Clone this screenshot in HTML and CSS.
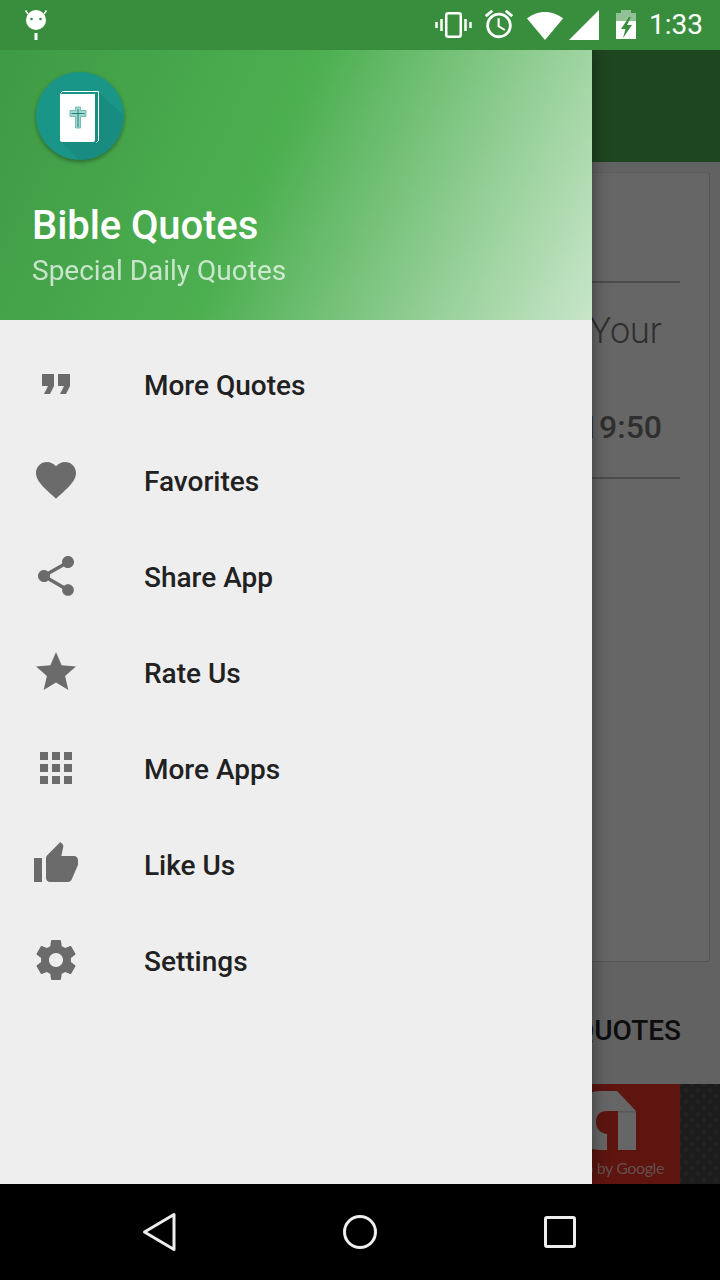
FILE: index.html
```html
<!DOCTYPE html>
<html lang="en">
<head>
<meta charset="utf-8">
<title>Bible Quotes</title>
<link rel="stylesheet" href="styles.css">
</head>
<body>
<div class="phone">
  <header class="status">
    <svg class="st-android" width="24" height="32" viewBox="0 0 24 32"><circle cx="12" cy="10" r="10" fill="#fff"/><path d="M4 4 1.500 0.500M20 4 22.500 0.500" stroke="#fff" stroke-width="1.500"/><circle cx="7.500" cy="9" r="1.300" fill="#388e3c"/><circle cx="16.500" cy="9" r="1.300" fill="#388e3c"/><rect x="10.500" y="23" width="3" height="7" fill="#fff"/></svg>
    <div class="st-right">
      <svg width="39" height="30" viewBox="0 0 39 30"><rect x="12.250" y="3.250" width="14.500" height="23.500" rx="2" fill="none" stroke="#fff" stroke-width="2.500"/><path d="M7.500 9v12M31.500 9v12" stroke="#fff" stroke-width="2.500"/><path d="M2.500 12v6M36.500 12v6" stroke="#fff" stroke-width="2.500"/></svg>
      <svg class="st-alarm" width="34" height="34" viewBox="0 0 24 24"><path fill="#fff" d="M22 5.720l-4.600-3.860-1.290 1.530 4.600 3.860L22 5.720zM7.880 3.390L6.600 1.860 2 5.710l1.290 1.530 4.590-3.850zM12.500 8H11v6l4.750 2.850.75-1.230-4-2.370V8zM12 4c-4.970 0-9 4.030-9 9s4.030 9 9 9 9-4.030 9-9-4.030-9-9-9zm0 16c-3.870 0-7-3.130-7-7s3.130-7 7-7 7 3.130 7 7-3.130 7-7 7z"/></svg>
      <svg class="st-wifi" width="36" height="28" viewBox="0 0 36 28"><path fill="#fff" d="M18 28 0 6.500C5 2.500 11 0 18 0s13 2.500 18 6.500z"/></svg>
      <svg class="st-signal" width="30" height="30" viewBox="0 0 30 30"><path fill="#fff" d="M30 0v30H0z"/></svg>
      <svg class="st-batt" width="20" height="30" viewBox="0 0 20 30"><path fill="#fff" fill-opacity=".45" d="M5 0h10v3h5v8H0V3h5z"/><path fill="#fff" d="M0 11h20v18H0z"/><path fill="#388e3c" d="M13 7 5 19h4.500L7 28l9-13h-5l4-8z"/></svg>
      <span class="st-time">1:33</span>
    </div>
  </header>

  <main class="stage">
    <div class="app">
      <div class="app-bar"></div>
      <div class="app-body">
        <div class="card">
          <div class="card-inner">
            <div class="card-line"></div>
            <div class="card-your">Your</div>
            <div class="card-time">19:50</div>
            <div class="card-line"></div>
          </div>
        </div>
      </div>
      <div class="app-tab">QUOTES</div>
      <div class="ad">
        <div class="ad-red">
          <svg class="ad-logo" width="70" height="70" viewBox="0 0 70 70"><path fill="#fff" d="M10 7H47L66 27V66H48V27H37C28 27 26 33 26 38C26 45 30 49 37 50V66H30C15 66 5 55 5 38C5 20 15 7 30 7Z"/><path fill="#dcdcdc" d="M48 27h18v1.500H48z"/></svg>
          <span class="ad-text">o by Google</span>
        </div>
        <div class="ad-dark"></div>
      </div>
    </div>
    <div class="scrim"></div>

    <nav class="drawer">
      <div class="drawer-head">
        <svg class="logo" width="92" height="92" viewBox="0 0 92 92">
          <circle cx="46" cy="46" r="44" fill="#1a9688"/>
          <path fill="#188c80" d="M64 22 89.500 45A44 44 0 0 1 45 90L26 70z"/>
          <path fill="none" stroke="#fff" d="M26.500 23.500l2-2h36v49l-2 2"/>
          <path fill="#fff" d="M26 24h35v46c0 1-1 2-2 2H28c-1 0-2-1-2-2z"/>
          <path fill="#a3d7d0" stroke="#5fb3a8" stroke-width=".8" d="M41.500 37h5v3.500H52v6h-5.500V58h-5V46.500H36v-6h5.500z"/>
          <path fill="none" stroke="#1a8276" stroke-width="1" d="M44 39v18M37.500 43.500h13"/>
        </svg>
        <div class="drawer-title">Bible Quotes</div>
        <div class="drawer-sub">Special Daily Quotes</div>
      </div>
      <ul class="menu">
        <li class="item"><svg class="icon" viewBox="0 0 24 24"><path d="M6 17h3l2-4V7H5v6h3zm8 0h3l2-4V7h-6v6h3z"/></svg><span>More Quotes</span></li>
        <li class="item"><svg class="icon" viewBox="0 0 24 24"><path d="M12 21.350l-1.450-1.320C5.400 15.360 2 12.280 2 8.500 2 5.420 4.420 3 7.500 3c1.740 0 3.410.81 4.500 2.090C13.090 3.810 14.760 3 16.500 3 19.580 3 22 5.420 22 8.500c0 3.780-3.400 6.860-8.550 11.540L12 21.350z"/></svg><span>Favorites</span></li>
        <li class="item"><svg class="icon" viewBox="0 0 24 24"><path d="M18 16.080c-.76 0-1.440.3-1.960.77L8.910 12.700c.05-.23.09-.46.09-.7s-.04-.47-.09-.7l7.050-4.110c.54.5 1.250.81 2.040.81 1.660 0 3-1.340 3-3s-1.340-3-3-3-3 1.340-3 3c0 .24.04.47.09.7L8.040 9.810C7.500 9.310 6.790 9 6 9c-1.660 0-3 1.340-3 3s1.340 3 3 3c.79 0 1.500-.31 2.040-.81l7.120 4.160c-.05.21-.08.43-.08.65 0 1.610 1.310 2.920 2.920 2.920 1.610 0 2.920-1.310 2.920-2.920s-1.310-2.920-2.920-2.920z"/></svg><span>Share App</span></li>
        <li class="item"><svg class="icon" viewBox="0 0 24 24"><path d="M12 17.270 18.180 21l-1.640-7.030L22 9.240l-7.190-.61L12 2 9.190 8.630 2 9.240l5.460 4.730L5.820 21z"/></svg><span>Rate Us</span></li>
        <li class="item"><svg class="icon" viewBox="0 0 24 24"><path d="M4 8h4V4H4v4zm6 12h4v-4h-4v4zm-6 0h4v-4H4v4zm0-6h4v-4H4v4zm6 0h4v-4h-4v4zm6-10v4h4V4h-4zm-6 4h4V4h-4v4zm6 6h4v-4h-4v4zm0 6h4v-4h-4v4z"/></svg><span>More Apps</span></li>
        <li class="item"><svg class="icon" viewBox="0 0 24 24"><path d="M1 21h4V9H1v12zm22-11c0-1.100-.9-2-2-2h-6.310l.95-4.570.03-.32c0-.41-.17-.79-.44-1.060L14.170 1 7.590 7.590C7.220 7.950 7 8.450 7 9v10c0 1.100.9 2 2 2h9c.83 0 1.540-.5 1.840-1.220l3.020-7.050c.09-.23.14-.47.14-.73v-2z"/></svg><span>Like Us</span></li>
        <li class="item"><svg class="icon" viewBox="0 0 24 24"><path d="M19.430 12.980c.04-.32.07-.64.07-.98s-.03-.66-.07-.98l2.110-1.650c.19-.15.24-.42.12-.64l-2-3.460c-.12-.22-.39-.3-.61-.22l-2.490 1c-.52-.4-1.080-.73-1.690-.98l-.38-2.650C14.460 2.180 14.250 2 14 2h-4c-.25 0-.46.18-.49.42l-.38 2.650c-.61.25-1.170.59-1.690.98l-2.490-1c-.23-.09-.49 0-.61.22l-2 3.460c-.13.22-.07.49.12.64l2.110 1.650c-.04.32-.07.65-.07.98s.03.66.07.98l-2.110 1.650c-.19.15-.24.42-.12.64l2 3.460c.12.22.39.3.61.22l2.490-1c.52.4 1.080.73 1.690.98l.38 2.650c.03.24.24.42.49.42h4c.25 0 .46-.18.49-.42l.38-2.650c.61-.25 1.170-.59 1.690-.98l2.490 1c.23.09.49 0 .61-.22l2-3.460c.12-.22.07-.49-.12-.64l-2.110-1.650zM12 15.500c-1.930 0-3.500-1.570-3.500-3.500s1.570-3.500 3.500-3.500 3.500 1.570 3.500 3.500-1.570 3.500-3.500 3.500z"/></svg><span>Settings</span></li>
      </ul>
    </nav>
  </main>

  <footer class="navbar">
    <svg width="36" height="40" viewBox="0 0 36 40"><path fill="none" stroke="#eee" stroke-width="3" stroke-linejoin="round" d="M34 2.500v35L4.500 20z"/></svg>
    <svg width="36" height="36" viewBox="0 0 36 36"><circle cx="18" cy="18" r="15.500" fill="none" stroke="#eee" stroke-width="3"/></svg>
    <svg width="32" height="32" viewBox="0 0 32 32"><rect x="1.500" y="1.500" width="29" height="29" rx="1.500" fill="none" stroke="#eee" stroke-width="3"/></svg>
  </footer>
</div>
</body>
</html>
```
FILE: styles.css
```css
* { box-sizing: border-box; }
html, body { margin: 0; padding: 0; }
body { font-family: Roboto, "Noto Sans", sans-serif; background: #000; }
.phone { width: 720px; height: 1280px; display: flex; flex-direction: column; overflow: hidden; }

.status { height: 50px; flex: none; background: #388e3c; display: flex; align-items: center; justify-content: space-between; padding: 0 17px 0 24px; }
.st-android { margin-top: 2px; }
.st-right { display: flex; align-items: center; }
.st-right svg { display: block; }
.st-alarm { margin-left: 9px; margin-top: -2px; }
.st-wifi { margin-left: 11px; margin-top: 1px; }
.st-signal { margin-left: 6px; }
.st-batt { margin-left: 17px; }
.st-time { color: #fff; font-size: 28px; margin-left: 13px; line-height: 1; }

.stage { position: relative; flex: 1; overflow: hidden; }
.app { height: 100%; display: flex; flex-direction: column; background: #fafafa; }
.app-bar { height: 112px; flex: none; background: #4caf50; }
.app-body { flex: 1; padding: 10px 10px 10px 0; background: #f5f5f5; display: flex; }
.card { flex: 1; background: #ffffff; border: 1px solid #e6e6e6; border-right-color: #cfcfcf; border-bottom-color: #cfcfcf; border-radius: 3px; padding-top: 108px; }
.card-inner { width: 679px; display: flex; flex-direction: column; align-items: flex-end; }
.card-line { height: 2px; width: 100%; background: #bdbdbd; }
.card-your { font-size: 36px; font-weight: 300; color: #757575; line-height: 42px; margin: 27px 18px 0 0; }
.card-time { font-size: 32px; font-weight: 500; color: #757575; line-height: 38px; margin: 56px 18px 31px 0; }
.app-tab { height: 112px; flex: none; background: #f5f5f5; display: flex; align-items: center; justify-content: flex-end; padding: 4px 39px 0 0; font-size: 28px; font-weight: 500; color: #212121; }
.ad { height: 100px; flex: none; display: flex; }
.ad-red { position: relative; flex: none; width: 680px; background: #eb3528; }
.ad-logo { position: absolute; left: 570px; top: 0; }
.ad-text { position: absolute; right: 16px; top: 73px; font-size: 16px; letter-spacing: -.4px; line-height: 22px; color: #fff; font-family: Lato, sans-serif; opacity: .7; }
.ad-dark { flex: 1; background-color: #464646; background-image: radial-gradient(circle, #565656 0 2px, transparent 3px), radial-gradient(circle, #565656 0 2px, transparent 3px); background-size: 12px 12px; background-position: 0 0, 6px 6px; }

.scrim { position: absolute; inset: 0; background: rgba(0, 0, 0, .6); }

.drawer { position: absolute; left: 0; top: 0; bottom: 0; width: 592px; background: #eeeeee; box-shadow: 0 0 16px rgba(0, 0, 0, .45); display: flex; flex-direction: column; }
.drawer-head { height: 270px; flex: none; padding: 20px 0 0 32px; background: linear-gradient(115deg, #3f9a45 0%, #4caf50 45%, #c8e6c9 100%); }
.logo { display: block; margin-left: 2px; filter: drop-shadow(0 2px 2px rgba(0, 0, 0, .35)); }
.drawer-title { font-size: 40px; font-weight: 500; color: #fff; line-height: 44px; margin-top: 42px; letter-spacing: -.1px; }
.drawer-sub { font-size: 28px; color: #fff; opacity: .7; line-height: 34px; margin-top: 6px; }

.menu { list-style: none; margin: 0; padding: 16px 0 0 0; }
.item { height: 96px; display: flex; align-items: center; padding-left: 32px; font-size: 28px; font-weight: 500; color: #212121; }
.item span { margin-left: 64px; padding-top: 2px; }
.icon { width: 48px; height: 48px; fill: #6b6b6b; display: block; }

.navbar { height: 96px; flex: none; background: #000; display: flex; align-items: center; justify-content: space-between; padding: 0 144px 0 140px; }
```
